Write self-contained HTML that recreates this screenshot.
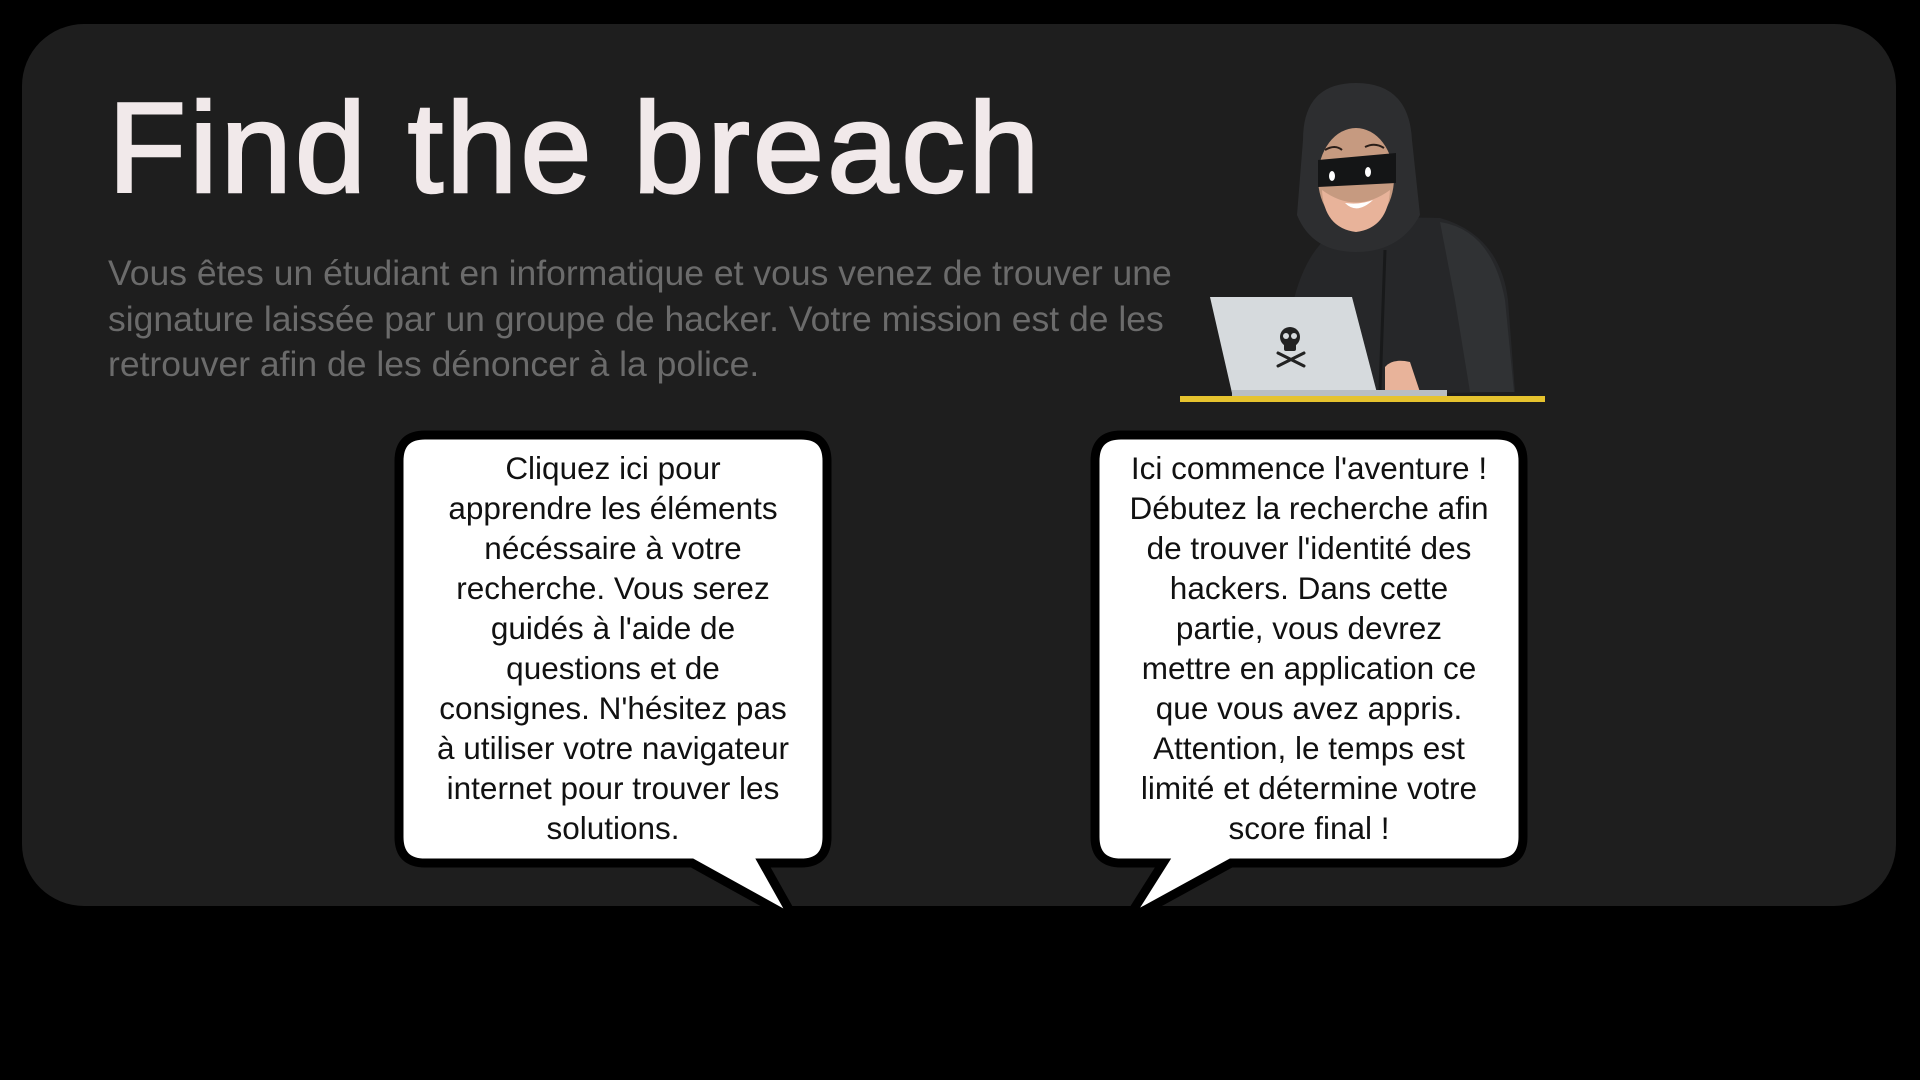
<!DOCTYPE html>
<html><head><meta charset="utf-8"><style>
html,body{margin:0;padding:0;background:#000;width:1920px;height:1080px;overflow:hidden}
.card{position:absolute;left:22px;top:24px;width:1874px;height:882px;background:#1e1e1e;border-radius:62px}
h1{position:absolute;left:108px;top:72px;margin:0;font:400 128px/1.2 "Liberation Sans",sans-serif;color:#f1e9ea;-webkit-text-stroke:2.5px #f1e9ea;letter-spacing:3px;white-space:nowrap}
.p{position:absolute;left:108px;top:251px;width:1200px;font:35.5px/45.5px "Liberation Sans",sans-serif;color:#6b6b6b}
.b{position:absolute;font:31.5px/40px "Liberation Sans",sans-serif;color:#111;text-align:center}
</style></head><body>
<div class="card"></div>
<h1>Find the breach</h1>
<div class="p">Vous êtes un étudiant en informatique et vous venez de trouver une<br>signature laissée par un groupe de hacker. Votre mission est de les<br>retrouver afin de les dénoncer à la police.</div>
<svg width="1920" height="1080" style="position:absolute;left:0;top:0">
<path d="M425 435 H801 Q827 435 827 461 V837 Q827 863 801 863 H763 L795 920 L692 863 H425 Q399 863 399 837 V461 Q399 435 425 435 Z" fill="#fff" stroke="#000" stroke-width="9"/>
<path d="M1121 435 H1497 Q1523 435 1523 461 V837 Q1523 863 1497 863 H1231 L1127 920 L1163 863 H1121 Q1095 863 1095 837 V461 Q1095 435 1121 435 Z" fill="#fff" stroke="#000" stroke-width="9"/>
<path d="M1283 395 Q1285 270 1330 235 Q1356 215 1440 218 Q1500 235 1508 300 L1515 392 Z" fill="#262729"/>
<path d="M1440 222 Q1492 230 1505 300 L1514 392 L1470 392 L1455 300 Z" fill="#303234"/>
<path d="M1303 140 Q1303 83 1356 83 Q1409 83 1412 140 L1420 215 Q1400 252 1356 252 Q1312 252 1297 215 Z" fill="#2d2e30"/>
<ellipse cx="1356" cy="178" rx="38" ry="50" fill="#c69a80"/>
<path d="M1322 190 Q1356 215 1390 190 Q1388 228 1356 232 Q1324 228 1322 190Z" fill="#e8b39a"/>
<path d="M1318 160 L1396 153 L1396 183 L1318 187 Z" fill="#141516"/>
<ellipse cx="1332" cy="176" rx="3" ry="5" fill="#fff"/><ellipse cx="1368" cy="172" rx="3" ry="5" fill="#fff"/>
<path d="M1345 203 Q1357 215 1373 200 Q1360 205 1345 203Z" fill="#fff"/>
<path d="M1325 150 Q1335 144 1342 150 M1365 147 Q1375 142 1384 148" stroke="#2a1e18" stroke-width="2" fill="none"/>
<path d="M1385 250 L1380 390" stroke="#18191a" stroke-width="3"/>
<path d="M1385 367 Q1392 358 1410 362 L1420 392 L1385 392Z" fill="#e8b39a"/>
<path d="M1210 297 L1352 297 L1377 393 L1232 393 Z" fill="#d6dadd"/>
<rect x="1232" y="390" width="215" height="6" fill="#b9bec2"/>
<circle cx="1290" cy="337" r="10" fill="#222"/><rect x="1284" y="343" width="12" height="8" rx="2" fill="#222"/>
<circle cx="1286" cy="336" r="3" fill="#d6dadd"/><circle cx="1294" cy="336" r="3" fill="#d6dadd"/>
<path d="M1278 353 L1304 366 M1304 353 L1278 366" stroke="#222" stroke-width="3" stroke-linecap="round"/>
<rect x="1180" y="396" width="365" height="6" fill="#e6c32e"/>
</svg>
<div class="b" style="left:393px;top:448px;width:440px">Cliquez ici pour<br>apprendre les éléments<br>nécéssaire à votre<br>recherche. Vous serez<br>guidés à l'aide de<br>questions et de<br>consignes. N'hésitez pas<br>à utiliser votre navigateur<br>internet pour trouver les<br>solutions.</div>
<div class="b" style="left:1089px;top:448px;width:440px">Ici commence l'aventure !<br>Débutez la recherche afin<br>de trouver l'identité des<br>hackers. Dans cette<br>partie, vous devrez<br>mettre en application ce<br>que vous avez appris.<br>Attention, le temps est<br>limité et détermine votre<br>score final !</div>
</body></html>
